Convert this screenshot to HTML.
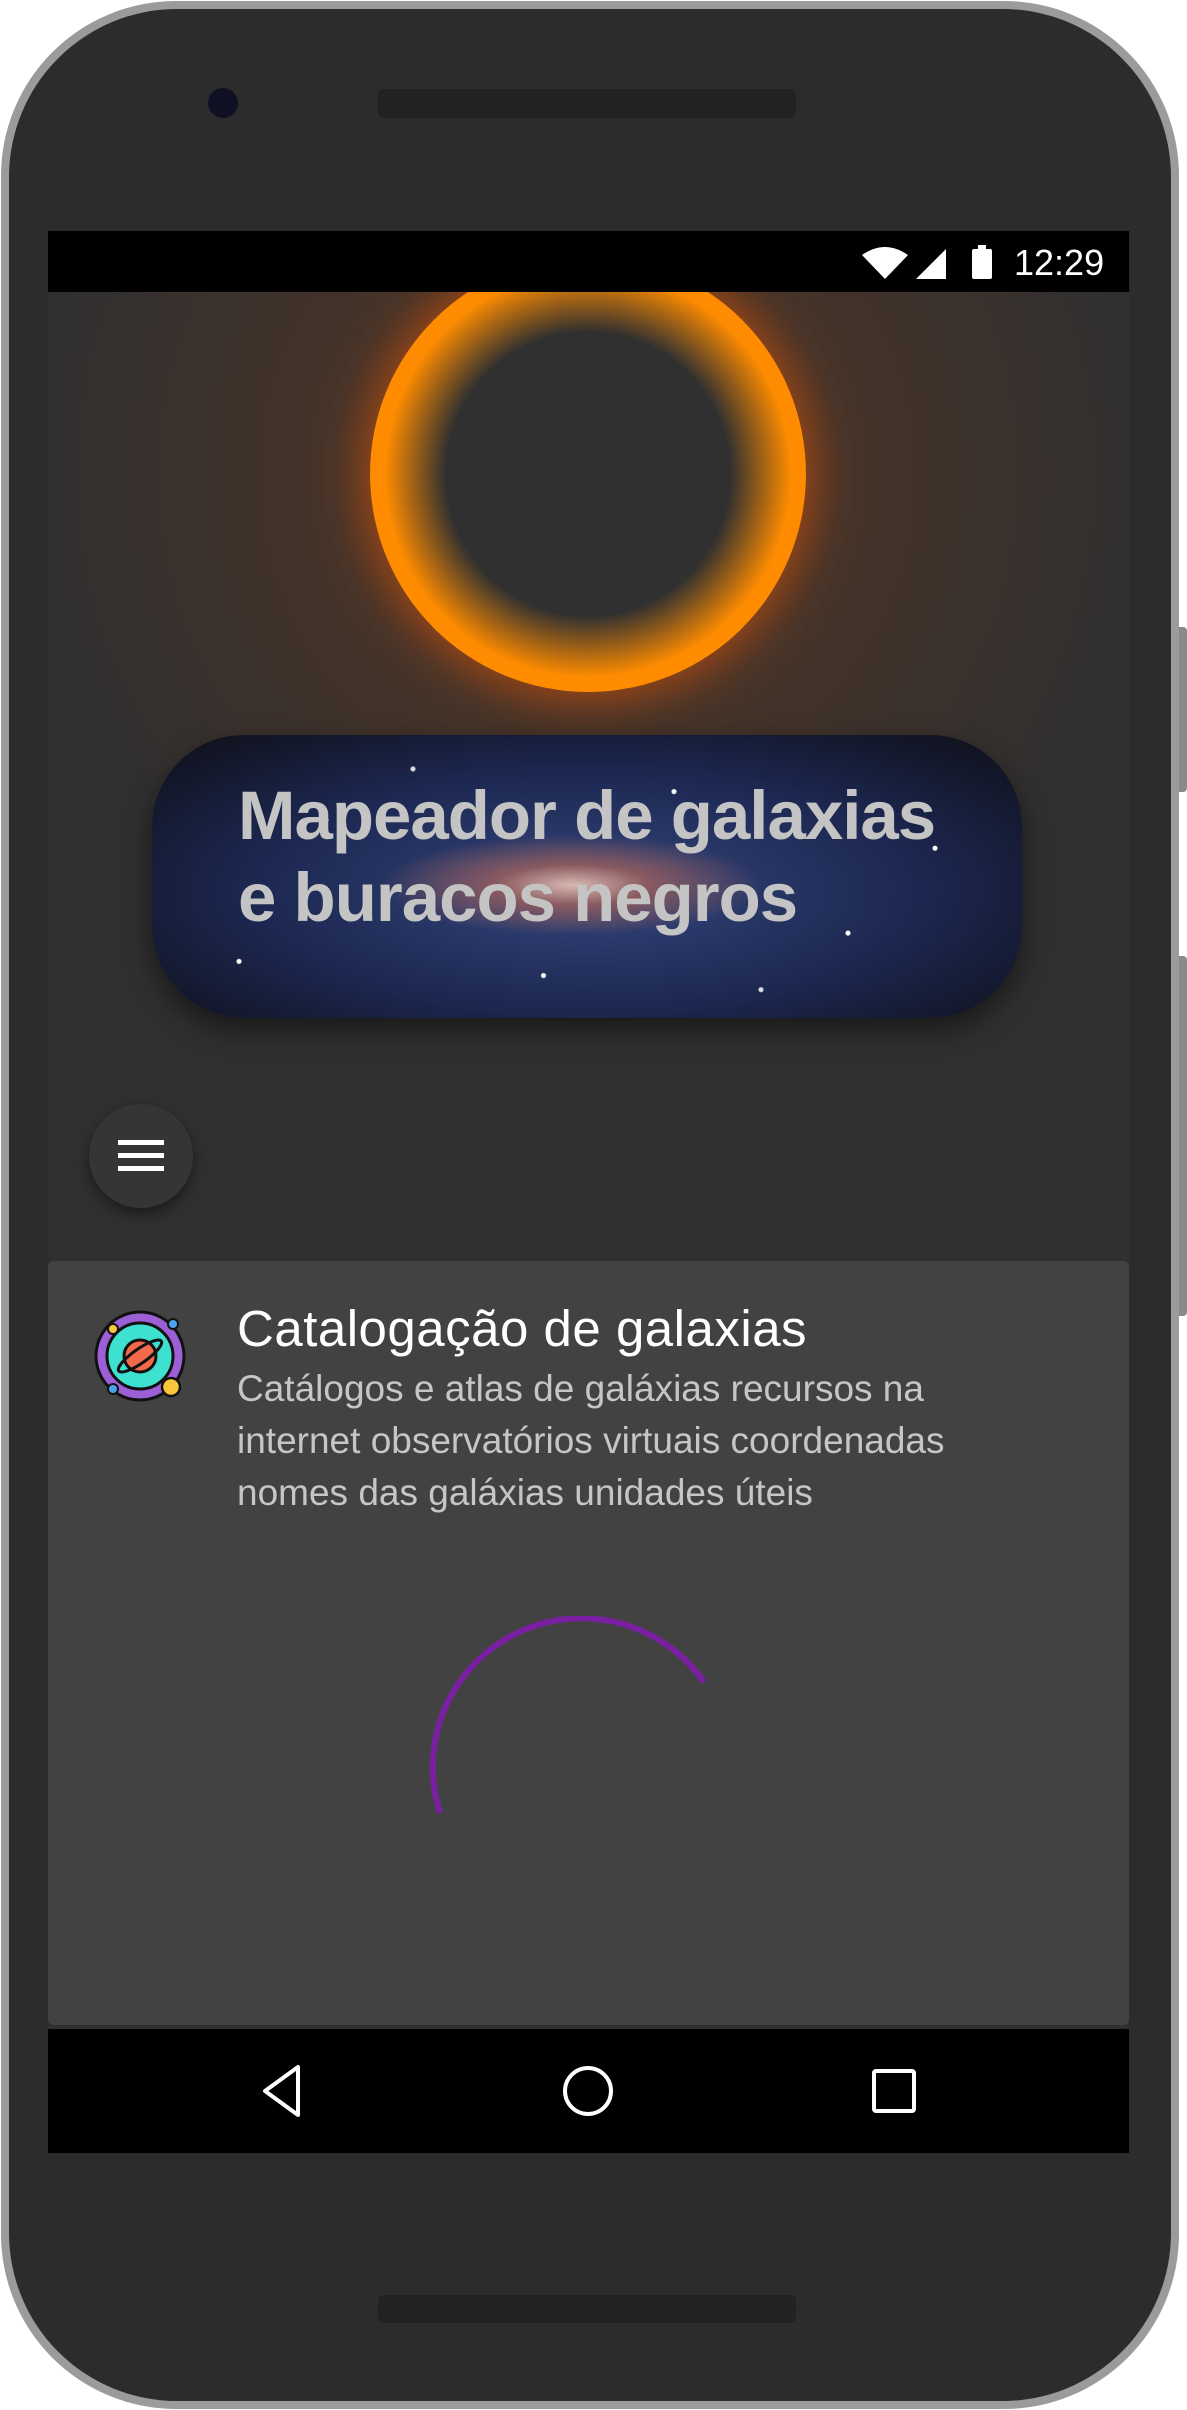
<!DOCTYPE html>
<html><head><meta charset="utf-8"><style>
*{margin:0;padding:0;box-sizing:border-box}
body{width:1187px;height:2410px;background:#fff;position:relative;overflow:hidden;font-family:"Liberation Sans",sans-serif}
.abs{position:absolute}
</style></head><body>
<div class="abs" style="left:1176px;top:627px;width:11px;height:165px;background:#8a8a8a;border-radius:0 4px 4px 0"></div>
<div class="abs" style="left:1176px;top:956px;width:11px;height:360px;background:#8a8a8a;border-radius:0 4px 4px 0"></div>
<div class="abs" style="left:1px;top:1px;width:1178px;height:2408px;background:#9b9b9b;border-radius:175px"></div>
<div class="abs" style="left:9px;top:9px;width:1162px;height:2392px;background:#2c2c2c;border-radius:168px"></div>
<div class="abs" style="left:208px;top:88px;width:30px;height:30px;border-radius:50%;background:#111126"></div>
<div class="abs" style="left:378px;top:89px;width:418px;height:29px;background:#222;border-radius:6px"></div>
<div class="abs" style="left:378px;top:2295px;width:418px;height:28px;background:#222;border-radius:6px"></div>
<!-- screen -->
<div class="abs" style="left:48px;top:231px;width:1081px;height:1922px;background:#303030;overflow:hidden">
  <div class="abs" style="left:0;top:61px;width:1081px;height:900px;background:radial-gradient(circle at 540px 182px,rgba(140,70,20,0.55) 0,rgba(100,55,30,0.35) 300px,rgba(48,48,48,0) 560px)"></div>
  <div class="abs" style="left:322px;top:25px;width:436px;height:436px;border-radius:50%;background:radial-gradient(circle,#303030 0,#303030 46%,#ff8c00 66%,#ff8c00 90%,#f56800 97%,rgba(240,80,0,0) 100%);box-shadow:0 0 40px 10px rgba(255,90,0,0.45)"></div>
  <!-- status bar -->
  <div class="abs" style="left:0;top:0;width:1081px;height:61px;background:#000"></div>
  <svg class="abs" style="left:812px;top:12px" width="140" height="40" viewBox="0 0 140 40">
    <path d="M2 12 Q25 -4 48 12 L25 36 Z" fill="#fff"/>
    <path d="M56 36 L86 6 L86 36 Z" fill="#fff"/>
    <rect x="112" y="6" width="20" height="30" rx="2" fill="#fff"/><rect x="118" y="2" width="8" height="5" fill="#fff"/>
  </svg>
  <div class="abs" style="left:966px;top:11px;color:#fff;font-size:36px">12:29</div>
  <!-- banner -->
  <div class="abs" style="left:104px;top:504px;width:870px;height:283px;border-radius:92px;overflow:hidden;box-shadow:0 12px 30px rgba(0,0,0,0.5);background:radial-gradient(ellipse 190px 50px at 420px 150px,#d8b8b0 0,#8a5a60 40%,rgba(60,70,130,0) 100%),radial-gradient(ellipse at 50% 55%,#34467c 0,#1c2750 55%,#0e0e14 100%)">
    <div class="abs" style="left:0;top:0;width:870px;height:283px;background-image:radial-gradient(circle at 20% 30%,#fff 0 2px,transparent 3px),radial-gradient(circle at 60% 20%,#fff 0 2px,transparent 3px),radial-gradient(circle at 80% 70%,#fff 0 2px,transparent 3px),radial-gradient(circle at 10% 80%,#fff 0 2px,transparent 3px),radial-gradient(circle at 45% 85%,#fff 0 2px,transparent 3px),radial-gradient(circle at 90% 40%,#fff 0 2px,transparent 3px),radial-gradient(circle at 30% 12%,#ddd 0 2px,transparent 3px),radial-gradient(circle at 70% 90%,#ddd 0 2px,transparent 3px)"></div>
    <div class="abs" style="left:86px;top:40px;color:#c4c4c4;font-weight:bold;font-size:69px;line-height:82px;letter-spacing:-1px;white-space:nowrap">Mapeador de galaxias<br>e buracos negros</div>
  </div>
  <!-- menu button -->
  <div class="abs" style="left:41px;top:873px;width:104px;height:104px;border-radius:50%;background:#353535;box-shadow:0 6px 14px rgba(0,0,0,0.45)"></div>
  <div class="abs" style="left:70px;top:909px;width:46px;height:5px;background:#fff"></div>
  <div class="abs" style="left:70px;top:922px;width:46px;height:5px;background:#fff"></div>
  <div class="abs" style="left:70px;top:935px;width:46px;height:5px;background:#fff"></div>
  <!-- card -->
  <div class="abs" style="left:0;top:1030px;width:1081px;height:764px;background:#424242;border-radius:6px"></div>
  <svg class="abs" style="left:45px;top:1078px" width="96" height="96" viewBox="0 0 96 96">
    <circle cx="47" cy="47" r="44" fill="#9c5fd6" stroke="#111" stroke-width="3"/>
    <circle cx="47" cy="47" r="33" fill="#3ee0d0" stroke="#111" stroke-width="3"/>
    <circle cx="47" cy="47" r="16" fill="#f26a4b" stroke="#111" stroke-width="3"/>
    <ellipse cx="47" cy="47" rx="26" ry="7" fill="none" stroke="#111" stroke-width="3" transform="rotate(-35 47 47)"/>
    <circle cx="78" cy="78" r="9" fill="#f7c63a" stroke="#111" stroke-width="2.5"/>
    <circle cx="20" cy="20" r="5" fill="#f7c63a" stroke="#111" stroke-width="2"/>
    <circle cx="20" cy="80" r="5" fill="#4aa3f0" stroke="#111" stroke-width="2"/>
    <circle cx="80" cy="15" r="5" fill="#4aa3f0" stroke="#111" stroke-width="2"/>
  </svg>
  <div class="abs" style="left:189px;top:1068px;color:#fff;font-size:51px;letter-spacing:0.5px;white-space:nowrap">Catalogação de galaxias</div>
  <div class="abs" style="left:189px;top:1132px;color:#c6c6c6;font-size:37px;line-height:52px;white-space:nowrap">Catálogos e atlas de galáxias recursos na<br>internet observatórios virtuais coordenadas<br>nomes das galáxias unidades úteis</div>
  <svg class="abs" style="left:380px;top:1385px" width="310" height="310" viewBox="0 0 310 310">
    <path d="M12 197 A149 149 0 0 1 276 66" fill="none" stroke="#7b1fa2" stroke-width="6"/>
  </svg>
  <!-- nav -->
  <div class="abs" style="left:0;top:1798px;width:1081px;height:124px;background:#000"></div>
  <svg class="abs" style="left:0;top:1798px" width="1081" height="124" viewBox="0 0 1081 124">
    <path d="M217 62 L250 38 L250 86 Z" fill="none" stroke="#fff" stroke-width="4" stroke-linejoin="round"/>
    <circle cx="540" cy="62" r="23" fill="none" stroke="#fff" stroke-width="4"/>
    <rect x="826" y="42" width="40" height="40" rx="2" fill="none" stroke="#fff" stroke-width="4"/>
  </svg>
</div>
</body></html>
